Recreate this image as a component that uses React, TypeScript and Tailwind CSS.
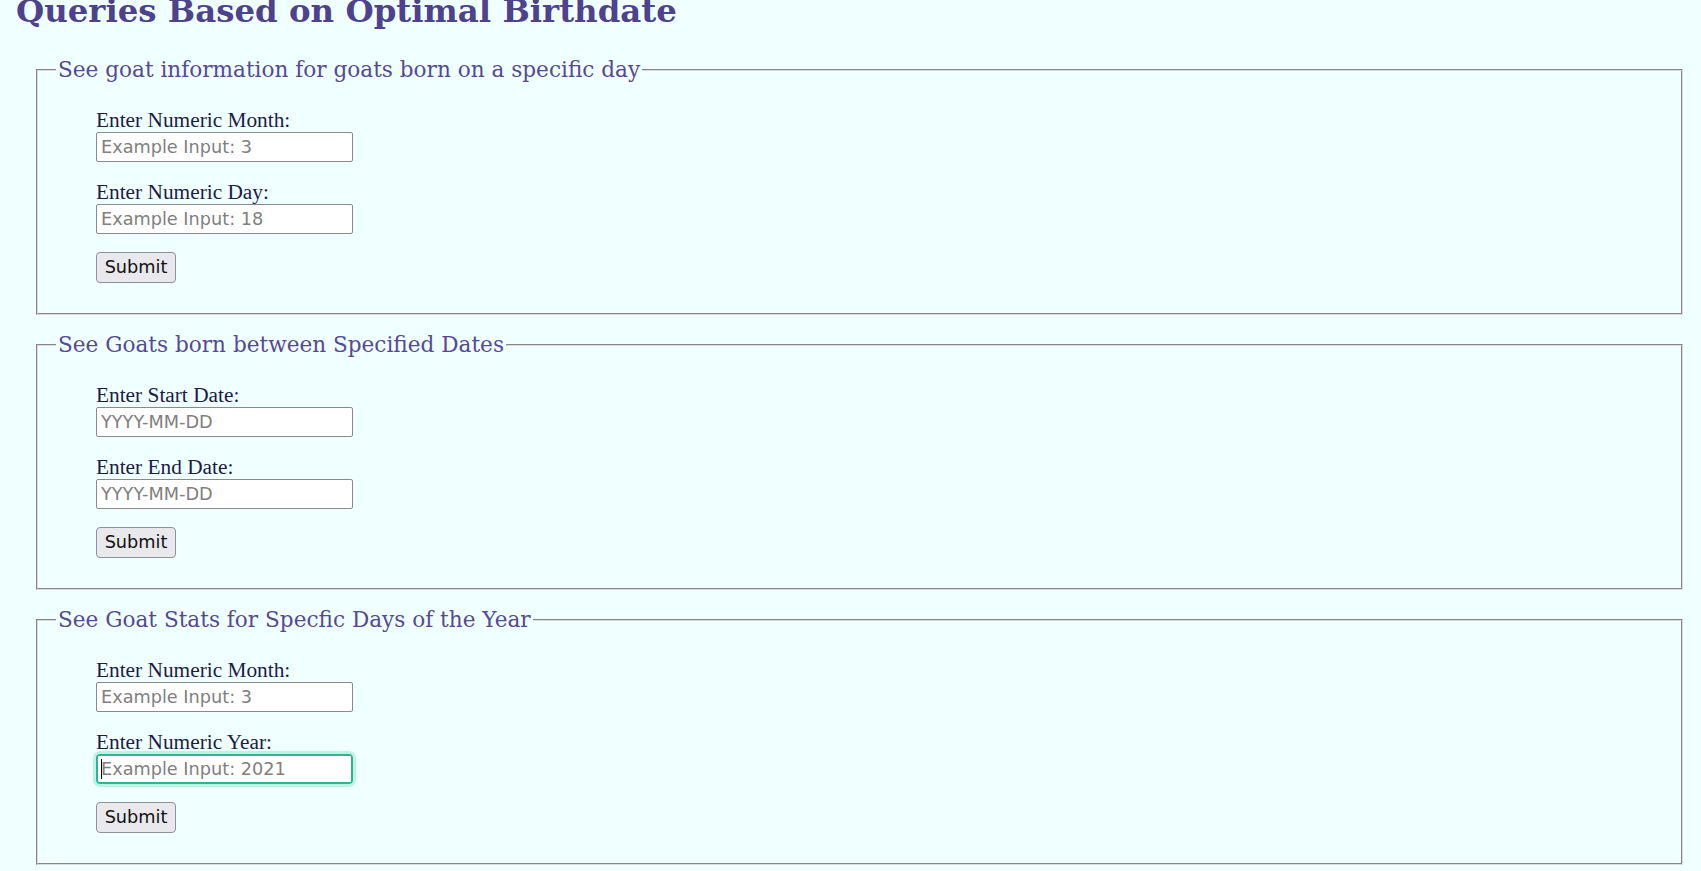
type Field = {
    label: string;
    placeholder: string;
    focused?: boolean;
};

type Query = {
    title: string;
    fields: Field[];
};

const queries: Query[] = [
    {
        title: "See goat information for goats born on a specific day",
        fields: [
            {label: "Enter Numeric Month:", placeholder: "Example Input: 3"},
            {label: "Enter Numeric Day:", placeholder: "Example Input: 18"},
        ],
    },
    {
        title: "See Goats born between Specified Dates",
        fields: [
            {label: "Enter Start Date:", placeholder: "YYYY-MM-DD"},
            {label: "Enter End Date:", placeholder: "YYYY-MM-DD"},
        ],
    },
    {
        title: "See Goat Stats for Specfic Days of the Year",
        fields: [
            {label: "Enter Numeric Month:", placeholder: "Example Input: 3"},
            {label: "Enter Numeric Year:", placeholder: "Example Input: 2021", focused: true},
        ],
    },
];

function QueryField({label, placeholder, focused}: Field) {
    return (
        <div className="flex flex-col items-start">
            <label className="block font-['Liberation_Serif',serif] text-[21.33px] leading-[24px] text-[#1c1c48]">
                {label}
            </label>
            {focused ? (
                <div className="relative rounded-[4px] outline-[3px] outline-[#bdf2e5]">
                    <input
                        type="text"
                        placeholder={placeholder}
                        className="block w-[257px] h-[30px] rounded-[3px] border-[2.5px] border-[#2fb393] bg-white px-[3px] font-['DejaVu_Sans',sans-serif] text-[17.7px] text-black placeholder:text-[#808080] outline-none"
                    />
                    <span className="absolute left-[5px] top-[5px] h-[20px] w-px bg-black" />
                </div>
            ) : (
                <input
                    type="text"
                    placeholder={placeholder}
                    className="block w-[257px] h-[30px] rounded-[2px] border border-[#8a8a8a] bg-white px-[4px] font-['DejaVu_Sans',sans-serif] text-[17.7px] text-black placeholder:text-[#808080] outline-none"
                />
            )}
        </div>
    );
}

function QuerySection({title, fields}: Query) {
    return (
        <fieldset className="ml-[36px] mr-[18px] border-2 [border-style:groove] border-[#dadada] pl-[18px] pr-4 pt-[26px] pb-[30px]">
            <legend className="px-[2px] font-['DejaVu_Serif',serif] text-[21.6px] leading-[25px] text-[#564a94]">
                {title}
            </legend>
            <div className="ml-[40px] flex flex-col items-start gap-[18px]">
                {fields.map((field) => (
                    <QueryField key={field.label} {...field} />
                ))}
                <button
                    type="button"
                    className="h-[31px] w-[80px] rounded-[4px] border border-[#8f8f9d] bg-[#e9e9ed] font-['DejaVu_Sans',sans-serif] text-[17.7px] text-[#111]"
                >
                    Submit
                </button>
            </div>
        </fieldset>
    );
}

export default function App() {
    return (
        <div className="min-h-screen bg-[#f0ffff] overflow-hidden">
            <div className="-mt-[7px] flex flex-col gap-[17px]">
                <h2 className="pl-[16px] mb-[10px] font-['DejaVu_Serif',serif] text-[32.4px] font-bold leading-[37px] text-[#4e428c]">
                    Queries Based on Optimal Birthdate
                </h2>
                {queries.map((query) => (
                    <QuerySection key={query.title} {...query} />
                ))}
            </div>
        </div>
    );
}
